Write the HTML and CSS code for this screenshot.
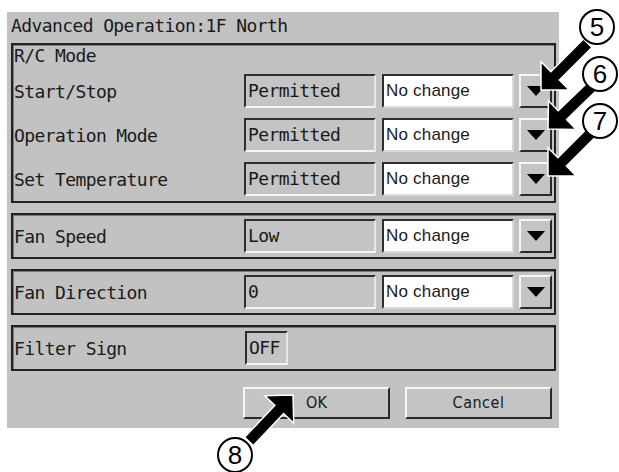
FILE: index.html
```html
<!DOCTYPE html>
<html>
<head>
<meta charset="utf-8">
<link rel="stylesheet" href="styles.css">
</head>
<body>
<div class="page">
  <div class="panel">
    <div class="title">Advanced Operation:1F North</div>

    <div class="group g1">
      <div class="ghead">R/C Mode</div>
      <div class="rows">
        <div class="row">
          <div class="label">Start/Stop</div>
          <div class="field ro">Permitted</div>
          <div class="field sel">No change</div>
          <div class="btn-dd"><span class="tri"></span></div>
        </div>
        <div class="row">
          <div class="label">Operation Mode</div>
          <div class="field ro">Permitted</div>
          <div class="field sel">No change</div>
          <div class="btn-dd"><span class="tri"></span></div>
        </div>
        <div class="row">
          <div class="label">Set Temperature</div>
          <div class="field ro">Permitted</div>
          <div class="field sel">No change</div>
          <div class="btn-dd"><span class="tri"></span></div>
        </div>
      </div>
    </div>

    <div class="group gs">
      <div class="row">
        <div class="label">Fan Speed</div>
        <div class="field ro">Low</div>
        <div class="field sel">No change</div>
        <div class="btn-dd"><span class="tri"></span></div>
      </div>
    </div>

    <div class="group gs">
      <div class="row">
        <div class="label">Fan Direction</div>
        <div class="field ro">0</div>
        <div class="field sel">No change</div>
        <div class="btn-dd"><span class="tri"></span></div>
      </div>
    </div>

    <div class="group gs">
      <div class="row">
        <div class="label fixed">Filter Sign</div>
        <div class="field ro short">OFF</div>
      </div>
    </div>

    <div class="buttons">
      <div class="btn">OK</div>
      <div class="btn cancel">Cancel</div>
    </div>
  </div>

  <svg class="notes" width="619" height="472" viewBox="0 0 619 472">
    <g class="arrow" transform="translate(541,90) rotate(-45)">
      <polygon points="0,0 20,-20 20,-6 66,-6 66,6 20,6 20,20"/>
    </g>
    <g class="arrow" transform="translate(548,129) rotate(-44)">
      <polygon points="0,0 20,-20 20,-6 62,-6 62,6 20,6 20,20"/>
    </g>
    <g class="arrow" transform="translate(548,176) rotate(-45)">
      <polygon points="0,0 20,-20 20,-6 64,-6 64,6 20,6 20,20"/>
    </g>
    <g class="arrow" transform="translate(293,395) rotate(133.5)">
      <polygon points="0,0 20,-20 20,-6 64,-6 64,6 20,6 20,20"/>
    </g>
    <circle class="badge" cx="597" cy="27" r="17"/>
    <text class="num" x="597" y="36">5</text>
    <circle class="badge" cx="600" cy="74" r="17"/>
    <text class="num" x="600" y="83">6</text>
    <circle class="badge" cx="600" cy="121" r="17"/>
    <text class="num" x="600" y="130">7</text>
    <circle class="badge" cx="235" cy="455" r="17"/>
    <text class="num" x="235" y="464">8</text>
  </svg>
</div>
</body>
</html>
```

FILE: styles.css
```css
html, body {
  margin: 0;
  padding: 0;
  background: #ffffff;
}

.page {
  position: relative;
  width: 619px;
  height: 472px;
  overflow: hidden;
}

.panel {
  margin: 12px 0 0 7px;
  width: 552px;
  height: 416px;
  background: #c2c2c2;
  box-sizing: border-box;
  padding: 0 3px 0 4px;
  font-family: "DejaVu Sans Mono", "Liberation Mono", monospace;
  font-size: 18px;
  letter-spacing: -0.6px;
  color: #1a1a1a;
}

.title {
  height: 31px;
  line-height: 28px;
  white-space: nowrap;
}

.group {
  border: 2px solid #222222;
  box-shadow: inset 1px 1px 0 #7a7a7a;
}

.g1 {
  padding: 0 1px 5px 0;
}

.ghead {
  height: 29px;
  line-height: 22px;
  padding-left: 1px;
}

.rows {
  display: flex;
  flex-direction: column;
  gap: 10px;
}

.gs {
  margin-top: 10px;
  padding: 4px 1px 4px 0;
}

.row {
  display: flex;
  align-items: center;
  height: 34px;
}

.label {
  flex: 1;
  padding-left: 1px;
  white-space: nowrap;
}

.label.fixed {
  flex: 0 0 231px;
}

.field {
  box-sizing: border-box;
  width: 132px;
  height: 34px;
  line-height: 30px;
  padding-left: 2px;
  border-top: 2px solid #2e2e2e;
  border-left: 2px solid #2e2e2e;
  border-bottom: 2px solid #f4f4f4;
  border-right: 2px solid #e6e6e6;
  white-space: nowrap;
  overflow: hidden;
}

.ro {
  background: #c4c4c4;
  margin-right: 6px;
}

.sel {
  background: #ffffff;
  font-family: "Liberation Sans", "DejaVu Sans", sans-serif;
  font-size: 17px;
  letter-spacing: 0.2px;
  border-bottom-color: #d8d8d8;
  border-right-color: #d8d8d8;
}

.short {
  width: 43px;
  margin-right: 0;
}

.btn-dd {
  box-sizing: border-box;
  width: 33px;
  height: 34px;
  margin-left: 5px;
  margin-right: 1px;
  background: #c4c4c4;
  border-top: 2px solid #f6f6f6;
  border-left: 2px solid #f6f6f6;
  border-bottom: 2px solid #2a2a2a;
  border-right: 2px solid #2a2a2a;
  display: flex;
  align-items: center;
  justify-content: center;
}

.tri {
  width: 0;
  height: 0;
  border-left: 9px solid transparent;
  border-right: 9px solid transparent;
  border-top: 10px solid #000;
}

.buttons {
  display: flex;
  justify-content: flex-end;
  gap: 15px;
  margin-top: 16px;
  padding-right: 4px;
}

.btn {
  box-sizing: border-box;
  width: 147px;
  height: 32px;
  line-height: 28px;
  text-align: center;
  background: #c4c4c4;
  border-top: 2px solid #f6f6f6;
  border-left: 2px solid #f6f6f6;
  border-bottom: 2px solid #2a2a2a;
  border-right: 2px solid #2a2a2a;
  font-family: "DejaVu Sans Condensed", "Liberation Sans Narrow", sans-serif;
  font-size: 16px;
  letter-spacing: 0;
}

.cancel {
  letter-spacing: 0.5px;
}

.notes {
  position: absolute;
  left: 0;
  top: 0;
  pointer-events: none;
}

.arrow polygon {
  fill: #000;
  stroke: #fff;
  stroke-width: 1.5;
  stroke-linejoin: miter;
}

.badge {
  fill: #fff;
  stroke: #000;
  stroke-width: 2;
}

.num {
  font-family: "Liberation Sans", Arial, sans-serif;
  font-size: 26px;
  text-anchor: middle;
  fill: #000;
}
```
